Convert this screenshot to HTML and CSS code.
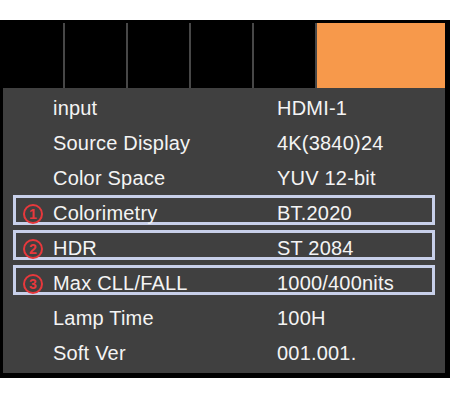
FILE: index.html
```html
<!DOCTYPE html>
<html lang="en">
  <head>
    <meta charset="utf-8" />
    <meta name="viewport" content="width=device-width, initial-scale=1" />
    <title>Signal Info</title>
    <link rel="stylesheet" href="styles.css">
  </head>
  <body>
    <div class="frame">
      <!-- menu tabs, last one is the selected info page -->
      <div class="tabs">
        <div class="tab"></div>
        <div class="tab"></div>
        <div class="tab"></div>
        <div class="tab"></div>
        <div class="tab"></div>
        <div class="tab active"></div>
      </div>

      <div class="panel">
        <div class="row">
          <span></span><span>input</span><span>HDMI-1</span>
        </div>
        <div class="row">
          <span></span><span>Source Display</span><span>4K(3840)24</span>
        </div>
        <div class="row">
          <span></span><span>Color Space</span><span>YUV 12-bit</span>
        </div>
        <div class="row marked">
          <span class="num">1</span><span>Colorimetry</span><span>BT.2020</span>
        </div>
        <div class="row marked">
          <span class="num">2</span><span>HDR</span><span>ST 2084</span>
        </div>
        <div class="row marked">
          <span class="num">3</span><span>Max CLL/FALL</span><span>1000/400nits</span>
        </div>
        <div class="row">
          <span></span><span>Lamp Time</span><span>100H</span>
        </div>
        <div class="row">
          <span></span><span>Soft Ver</span><span>001.001.</span>
        </div>
      </div>
    </div>
  </body>
</html>
```

FILE: styles.css
```css
body {
  margin: 0;
  background-color: #fff;
  font-family: "Liberation Sans", Arial, sans-serif;
}

.frame {
  width: 450px;
  box-sizing: border-box;
  margin-top: 20px;
  padding: 3px 5px 5px 3px;
  background-color: #000;
}

/* gray shows through the gaps as the thin dividers */
.tabs {
  display: flex;
  gap: 2px;
  height: 65px;
  background-color: #474747;
}

.tab {
  width: 61px;
  background-color: #000;
}

.tab:first-child {
  width: 60px;
}

.tab.active {
  flex: 1;
  background-color: #f7994b;
}

.panel {
  background-color: #404040;
  padding: 2px 0 8px;
}

.row {
  display: grid;
  grid-template-columns: 30px 224px 1fr;
  align-items: center;
  height: 30px;
  box-sizing: border-box;
  margin: 0 10px 5px;
  padding: 4px 0 0 7px;
  border: 3px solid transparent;
  color: #f4f4f4;
  font-size: 20px;
  letter-spacing: 0.2px;
}

.row:last-child {
  margin-bottom: 0;
}

.row.marked {
  border-color: #c8d0ea;
}

.num {
  display: flex;
  align-items: center;
  justify-content: center;
  width: 20px;
  height: 20px;
  box-sizing: border-box;
  border: 2px solid #e8383c;
  border-radius: 50%;
  color: #e8383c;
  font-size: 14px;
  font-weight: bold;
  line-height: 1;
  letter-spacing: 0;
}
```
